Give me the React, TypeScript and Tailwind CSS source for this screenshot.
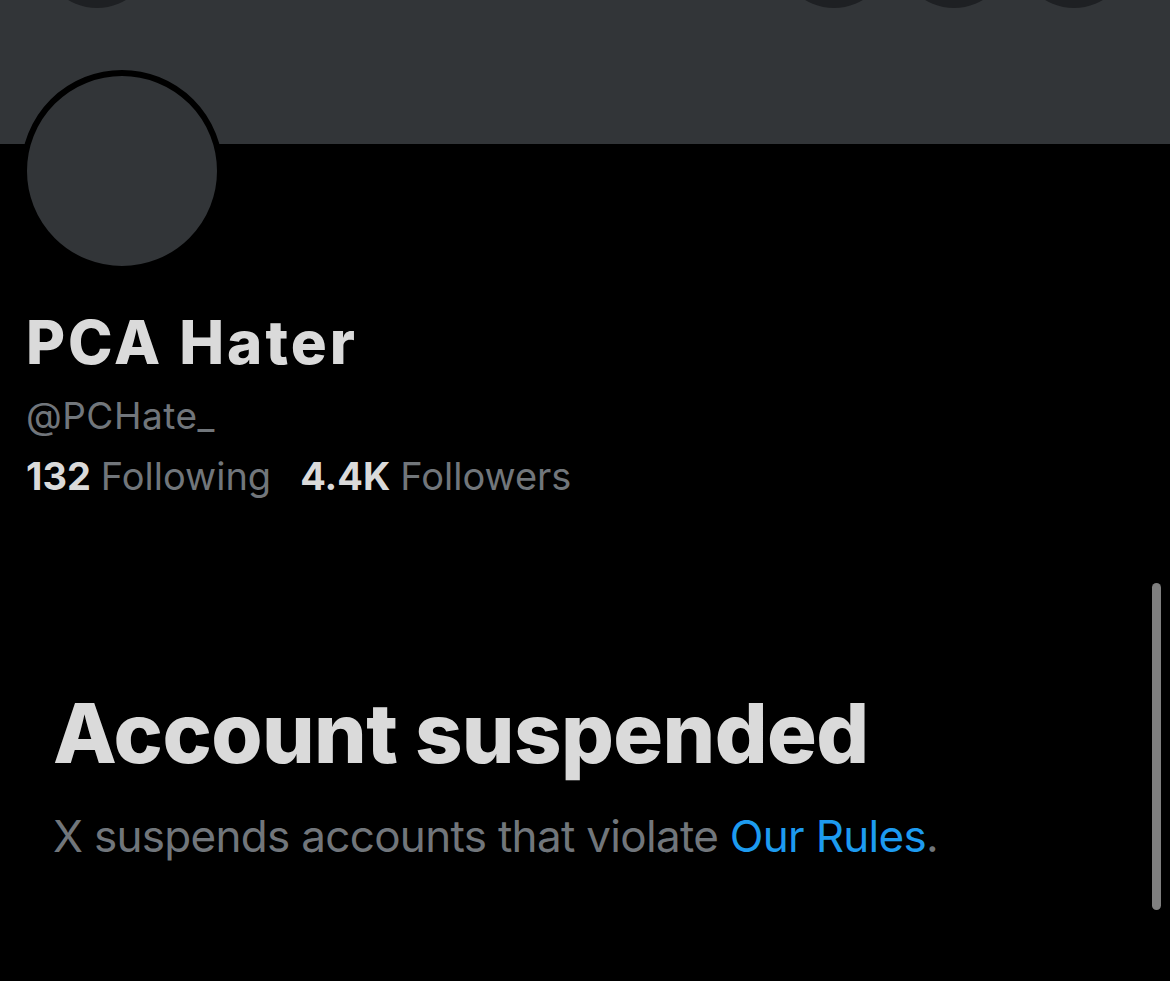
export default function App() {
  return (
    <div className="relative min-h-screen w-full overflow-hidden bg-black font-['Inter',sans-serif]">
      {/* banner with the cut-off header buttons */}
      <div className="flex flex-col h-[144px] bg-[#323538]">
        <div className="flex -mt-[104px] h-[112px] pl-[41px] pr-[40px]">
          <div className="w-[112px] h-[112px] rounded-full bg-[#1e2023]" />
          <div className="flex-1" />
          <div className="flex gap-[8px]">
            <div className="w-[112px] h-[112px] rounded-full bg-[#1e2023]" />
            <div className="w-[112px] h-[112px] rounded-full bg-[#1e2023]" />
            <div className="w-[112px] h-[112px] rounded-full bg-[#1e2023]" />
          </div>
        </div>
      </div>

      <div className="ml-[21px] -mt-[74px] w-[202px] h-[202px] rounded-full border-[6px] border-black bg-[#323538]" />

      <div className="pl-[26px]">
        <div className="mt-[40px] text-[60px] leading-none font-extrabold text-[#dadada] tracking-[3px]">PCA Hater</div>
        <div className="mt-[25px] text-[37px] leading-none text-[#71767b] tracking-[0.5px]">@PCHate_</div>
        <div className="mt-[23px] flex text-[38px] leading-none">
          <span className="font-bold text-[#dadada]">132</span>
          <span className="ml-[10px] text-[#71767b]">Following</span>
          <span className="ml-[29px] font-bold text-[#dadada]">4.4K</span>
          <span className="ml-[10px] text-[#71767b]">Followers</span>
        </div>
      </div>

      <div className="pl-[53px]">
        <div className="mt-[197px] text-[83px] leading-none font-extrabold text-[#dadada] tracking-[-0.6px]">Account suspended</div>
        <div className="mt-[39px] text-[44px] leading-none text-[#71767b] tracking-[-0.7px]">
          X suspends accounts that violate <span className="text-[#1d9bf0]">Our Rules</span>.
        </div>
      </div>

      {/* scroll indicator */}
      <div className="absolute left-[1152px] top-[583px] w-[9px] h-[327px] rounded-full bg-[#7f7f7f]" />
    </div>
  );
}
